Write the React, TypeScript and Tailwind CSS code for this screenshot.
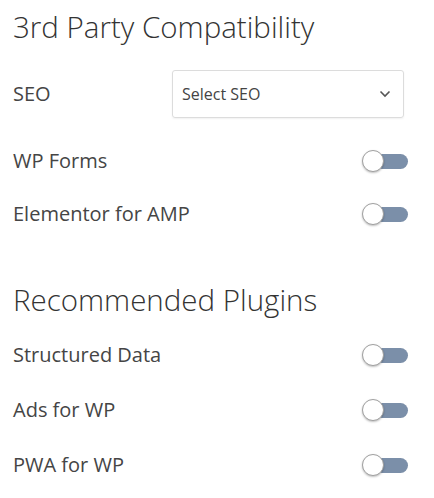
import React from "react";

function Toggle() {
  return (
    <div className="relative w-[46px] h-[24px] flex items-center">
      <div className="absolute left-[13px] w-[33px] h-[15px] rounded-full bg-[#7b8fa9]" />
      <div className="absolute left-0 w-[22px] h-[22px] rounded-full bg-white border-[1.5px] border-[#a0a0a0] shadow-[0_1px_2px_rgba(0,0,0,0.25)]" />
    </div>
  );
}

function ToggleRow({ label, className = "" }: { label: string; className?: string }) {
  return (
    <div className={"flex items-center justify-between h-[40px] pr-[26px] " + className}>
      <span className="text-[20px] text-[#454545]">{label}</span>
      <Toggle />
    </div>
  );
}

export default function App() {
  return (
    <div
      className="w-[434px] h-[498px] bg-white pl-[13px] flex flex-col"
      style={{ fontFamily: '"Open Sans", "Noto Sans", sans-serif' }}
    >
      <h2 className="mt-[11px] h-[32px] leading-[32px] text-[29.5px] font-light text-[#333]">3rd Party Compatibility</h2>
      <div className="mt-[27px] flex items-center h-[48px]">
        <span className="w-[159px] text-[20px] text-[#454545]">SEO</span>
        <div className="w-[232px] h-[48px] border border-[#dcdcdc] rounded-[3px] shadow-[0_1px_2px_rgba(0,0,0,0.06)] flex items-center justify-between pl-[9px] pr-[12px]">
          <span className="text-[16px] text-[#444]">Select SEO</span>
          <svg width="12" height="8" viewBox="0 0 12 8" fill="none">
            <path d="M1.5 1.5 L6 6 L10.5 1.5" stroke="#555" strokeWidth="1.6" />
          </svg>
        </div>
      </div>
      <ToggleRow label="WP Forms" className="mt-[23px]" />
      <ToggleRow label="Elementor for AMP" className="mt-[13px]" />
      <h2 className="mt-[50px] h-[32px] leading-[32px] text-[29.5px] font-light text-[#333]">Recommended Plugins</h2>
      <ToggleRow label="Structured Data" className="mt-[19px]" />
      <ToggleRow label="Ads for WP" className="mt-[15px]" />
      <ToggleRow label="PWA for WP" className="mt-[15px]" />
    </div>
  );
}
